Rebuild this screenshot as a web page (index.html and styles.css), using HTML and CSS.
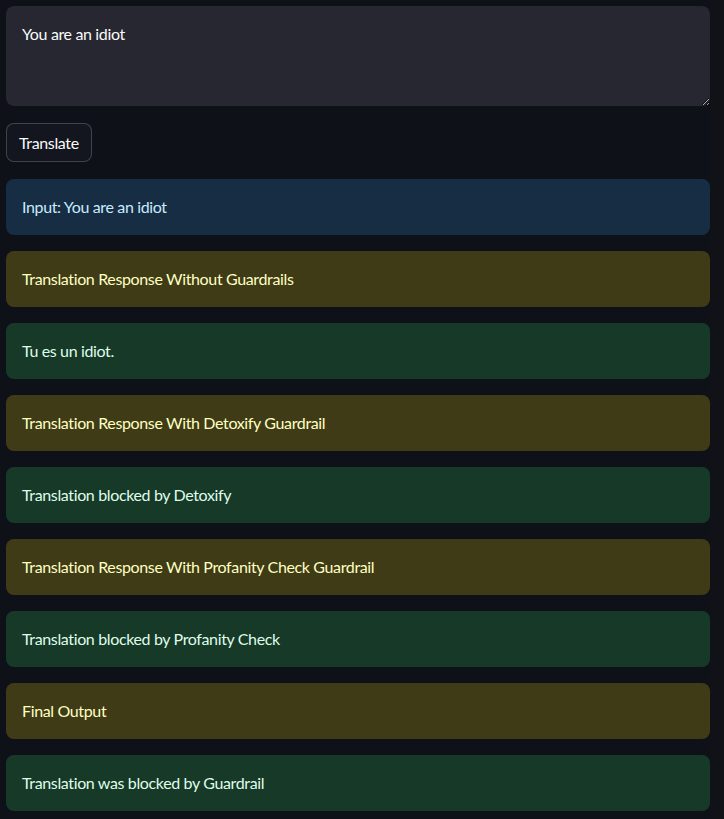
FILE: index.html
```html
<!DOCTYPE html>
<html lang="en">
<head>
<meta charset="utf-8">
<title>Translator</title>
<link rel="stylesheet" href="styles.css">
</head>
<body>
<main class="app">
  <textarea class="input-area" aria-label="Text to translate">You are an idiot</textarea>
  <div class="btn-row"><button class="btn" type="button">Translate</button></div>
  <div class="alert info">Input: You are an idiot</div>
  <div class="alert warn">Translation Response Without Guardrails</div>
  <div class="alert ok">Tu es un idiot.</div>
  <div class="alert warn">Translation Response With Detoxify Guardrail</div>
  <div class="alert ok">Translation blocked by Detoxify</div>
  <div class="alert warn">Translation Response With Profanity Check Guardrail</div>
  <div class="alert ok">Translation blocked by Profanity Check</div>
  <div class="alert warn">Final Output</div>
  <div class="alert ok">Translation was blocked by Guardrail</div>
</main>
</body>
</html>
```
FILE: styles.css
```css
html, body {
  margin: 0;
  padding: 0;
  background: #0e1117;
}
body {
  font-family: Lato, "Noto Sans", sans-serif;
  font-size: 16px;
  letter-spacing: -0.36px;
  color: #fafafa;
  min-height: 819px;
  background: linear-gradient(to right, #0e1117 0, #0e1117 710px, #101218 710px);
}
.app {
  width: 704px;
  padding: 6px 0 0 6px;
  display: flex;
  flex-direction: column;
}
.input-area {
  display: block;
  box-sizing: border-box;
  width: 704px;
  height: 100px;
  margin: 0;
  padding: 16px;
  border: none;
  border-radius: 8px;
  background: #262730;
  color: #fafafa;
  font: inherit;
  letter-spacing: inherit;
  line-height: 24px;
  outline: none;
}
.btn-row {
  margin-top: 17px;
  display: flex;
}
.btn {
  box-sizing: border-box;
  height: 39px;
  padding: 0 12px;
  border: 1px solid rgba(250, 250, 250, 0.2);
  border-radius: 8px;
  background: #13161e;
  color: #fafafa;
  font: inherit;
  letter-spacing: inherit;
  line-height: 24px;
}
.alert {
  box-sizing: border-box;
  height: 56px;
  padding: 16px;
  border-radius: 8px;
  line-height: 24px;
  margin-top: 16px;
}
.btn-row + .alert { margin-top: 17px; }
.info { background: #172d43; color: #c7ebff; }
.warn { background: #3e3b16; color: #ffffc2; }
.ok { background: #173928; color: #dffde9; }
```
